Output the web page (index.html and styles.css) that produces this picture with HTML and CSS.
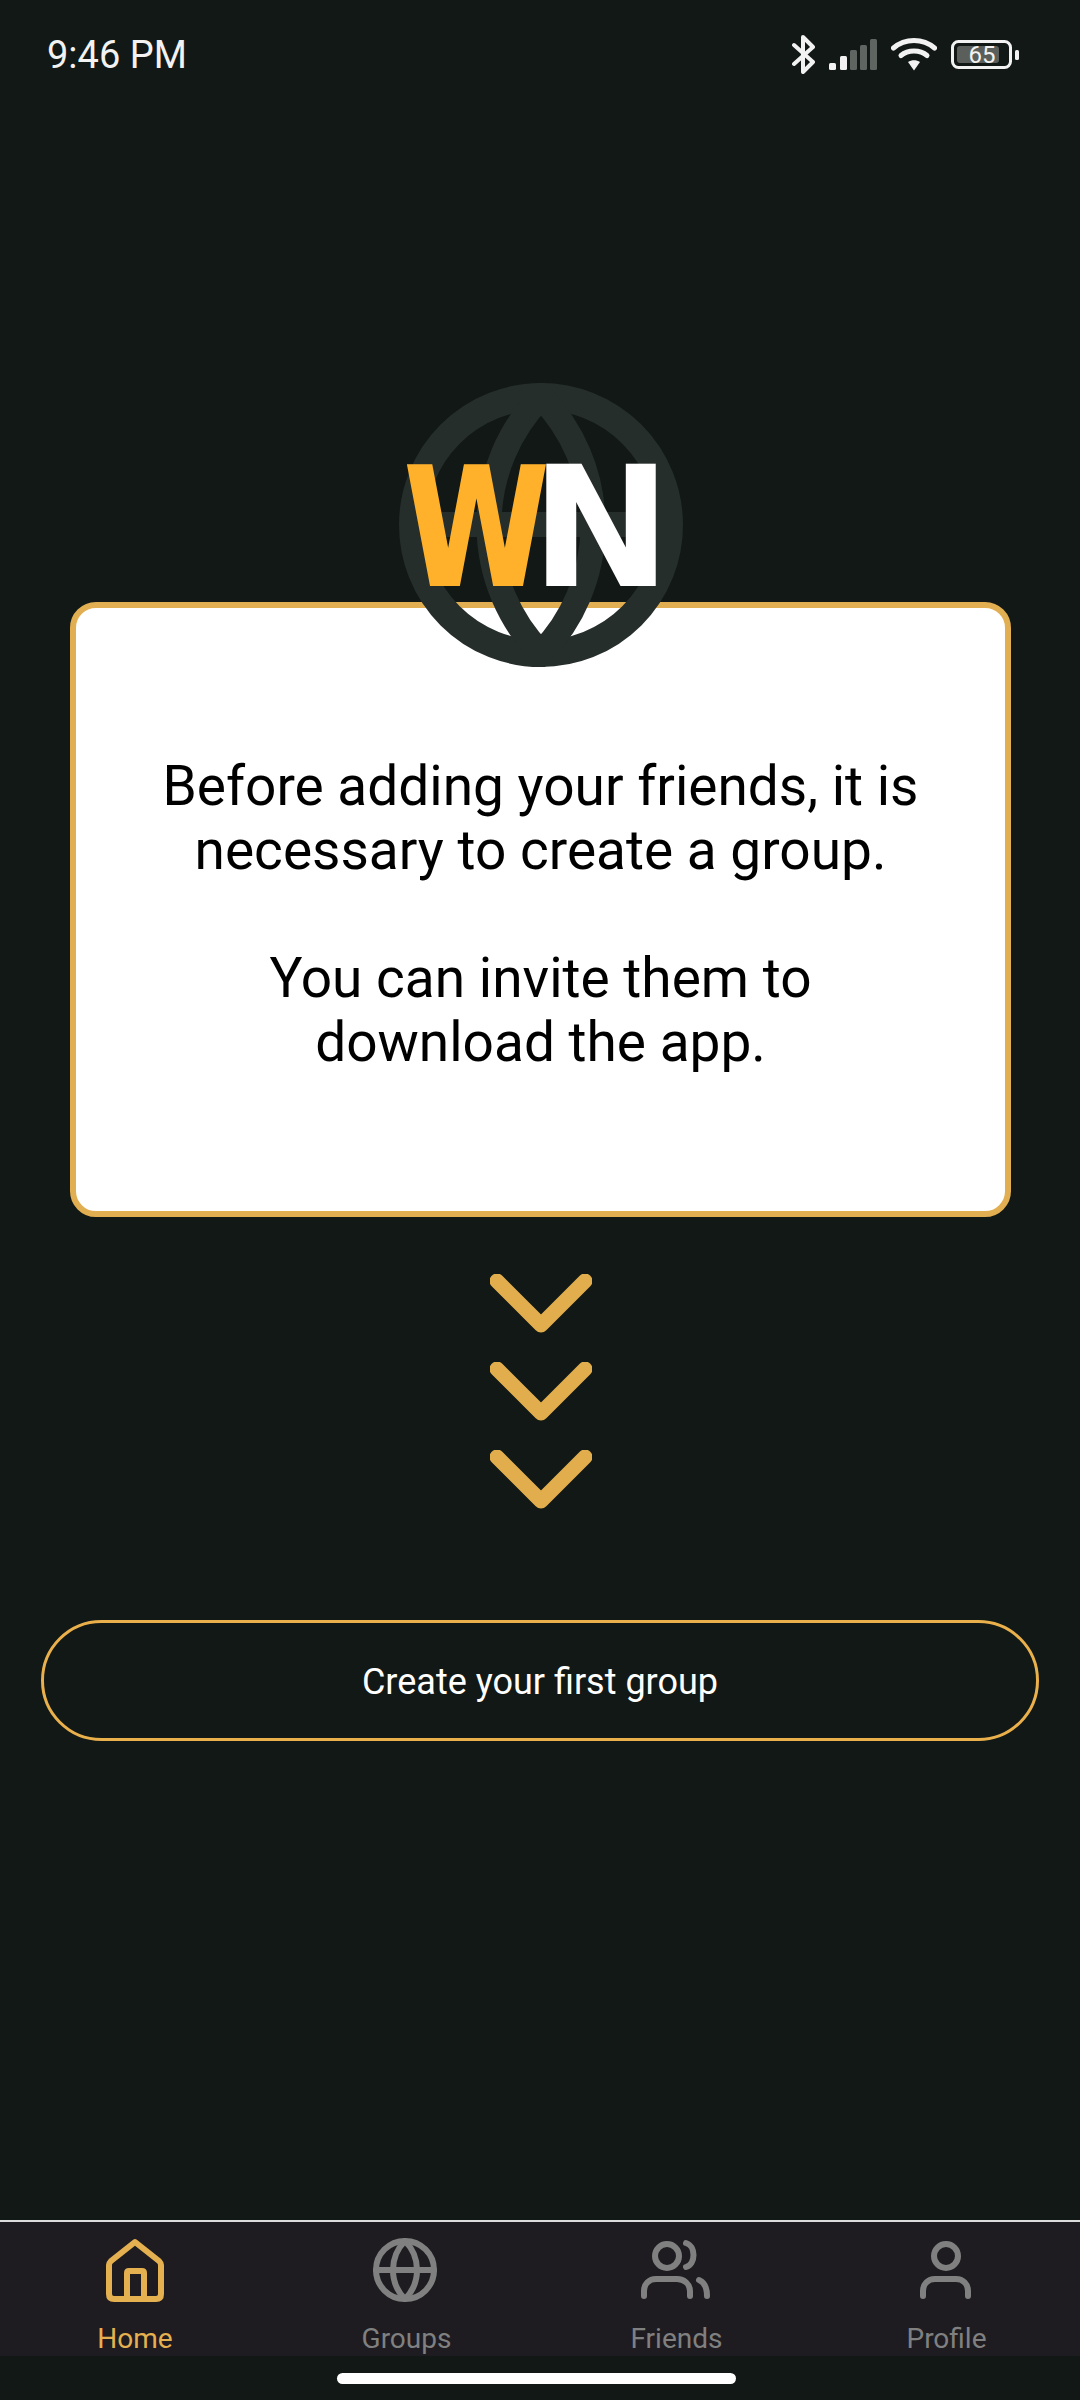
FILE: index.html
```html
<!DOCTYPE html>
<html lang="en">
<head>
    <meta charset="UTF-8">
    <meta name="viewport" content="width=device-width, initial-scale=1.0">
    <title>Home</title>
    <link rel="stylesheet" href="styles.css">
</head>
<body>
    <div class="screen">
        <div class="status-bar">
            <span class="status-time">9:46 PM</span>
            <div class="status-icons">
                <svg class="icon-bluetooth" viewBox="0 0 23 39" width="23" height="39">
                    <path d="M2 10 L21 27 L11 37 V2 L21 12 L2 29" fill="none" stroke="#f2f2f2" stroke-width="4" stroke-linecap="round" stroke-linejoin="round" />
                </svg>
                <svg class="icon-signal" viewBox="0 0 48 31" width="48" height="31">
                    <rect x="0" y="24" width="7" height="7" rx="1.5" fill="#f2f2f2" />
                    <rect x="11" y="17" width="7" height="14" rx="1.5" fill="#f2f2f2" />
                    <rect x="21" y="11" width="7" height="20" rx="1.5" fill="#5f6561" />
                    <rect x="31" y="6" width="7" height="25" rx="1.5" fill="#5f6561" />
                    <rect x="41" y="0" width="7" height="31" rx="1.5" fill="#5f6561" />
                </svg>
                <svg class="icon-wifi" viewBox="0 0 46 34" width="46" height="34">
                    <path d="M2.5 11 C14 1 32 1 43.5 11" fill="none" stroke="#f2f2f2" stroke-width="5" stroke-linecap="round" />
                    <path d="M10 18.5 C17 12.5 29 12.5 36 18.5" fill="none" stroke="#f2f2f2" stroke-width="5" stroke-linecap="round" />
                    <path d="M17 25 L23 33.5 L29 25 C25.5 22.5 20.5 22.5 17 25 Z" fill="#f2f2f2" />
                </svg>
                <svg class="icon-battery" viewBox="0 0 68 29" width="68" height="29">
                    <rect x="1.5" y="1.5" width="58" height="26" rx="6" fill="none" stroke="#f2f2f2" stroke-width="3" />
                    <rect x="6" y="6" width="42" height="17" rx="3" fill="#5a5f5c" />
                    <rect x="64" y="10" width="4" height="10" rx="1.5" fill="#f2f2f2" />
                    <text class="battery-level" x="31" y="23" text-anchor="middle">65</text>
                </svg>
            </div>
        </div>

        <div class="content">
            <svg class="logo" viewBox="0 0 284 284" width="284" height="284">
                <g fill="none" stroke="#262e2c">
                    <circle cx="142" cy="142" r="128.5" stroke-width="27" />
                    <path d="M142 14 A183.5 183.5 0 0 0 142 270 A183.5 183.5 0 0 0 142 14 Z" stroke-width="25" />
                    <path d="M14 141.5 H270" stroke-width="25" />
                </g>
                <text class="logo-letter logo-w" x="5" y="202" textLength="145" lengthAdjust="spacingAndGlyphs">W</text>
                <text class="logo-letter logo-n" x="132" y="203" textLength="140" lengthAdjust="spacingAndGlyphs">N</text>
            </svg>

            <div class="card">
                <p>Before adding your friends, it is<br>necessary to create a group.</p>
                <p>You can invite them to<br>download the app.</p>
            </div>

            <div class="chevrons">
                <svg viewBox="0 0 102 59" width="102" height="59"><path d="M7 7 L51 51 L95 7" /></svg>
                <svg viewBox="0 0 102 59" width="102" height="59"><path d="M7 7 L51 51 L95 7" /></svg>
                <svg viewBox="0 0 102 59" width="102" height="59"><path d="M7 7 L51 51 L95 7" /></svg>
            </div>

            <div class="create-btn">Create your first group</div>
        </div>

        <div class="tab-bar">
            <div class="tab tab-active">
                <svg viewBox="0 0 64 64" width="64" height="64">
                    <path d="M32 4 L56 23 Q58 25 58 27 V56 Q58 61 53 61 H11 Q6 61 6 56 V27 Q6 25 8 23 Z" />
                    <path d="M24 61 V35 Q24 33 26 33 H39 Q41 33 41 35 V61" />
                </svg>
                <span>Home</span>
            </div>
            <div class="tab">
                <svg viewBox="0 0 64 64" width="64" height="64">
                    <circle cx="32" cy="32" r="29" />
                    <path d="M32 3 A41 41 0 0 0 32 61 A41 41 0 0 0 32 3 Z" />
                    <path d="M3 32 H61" />
                </svg>
                <span>Groups</span>
            </div>
            <div class="tab">
                <svg viewBox="0 0 72 64" width="72" height="64">
                    <circle cx="28" cy="18" r="12" />
                    <path d="M47 5 C57 8 57 26 47 29" />
                    <path d="M5 58 V53 C5 46 10 41 17 41 H38 C45 41 51 46 51 53 V58" />
                    <path d="M60 42 C65 44 68 49 68 58" />
                </svg>
                <span>Friends</span>
            </div>
            <div class="tab">
                <svg viewBox="0 0 64 64" width="64" height="64">
                    <circle cx="33" cy="18" r="12" />
                    <path d="M10 58 V53 C10 46 15 41 22 41 H43 C50 41 55 46 55 53 V58" />
                </svg>
                <span>Profile</span>
            </div>
        </div>

        <div class="gesture-area">
            <div class="home-indicator"></div>
        </div>
    </div>
</body>
</html>
```

FILE: styles.css
```css
* {
    box-sizing: border-box;
}
body {
    margin: 0;
    background: #111815;
    font-family: 'Roboto', 'Liberation Sans', sans-serif;
    color: #fff;
}
.screen {
    display: flex;
    flex-direction: column;
    width: 1080px;
    height: 2400px;
    overflow: hidden;
}

/* status bar */
.status-bar {
    display: flex;
    justify-content: space-between;
    align-items: center;
    height: 108px;
    padding: 0 61px 0 47px;
}
.status-time {
    margin-top: 2px;
    font-size: 38px;
    color: #f2f2f2;
}
.status-icons {
    display: flex;
    align-items: center;
    gap: 14px;
}
.battery-level {
    font-family: 'Roboto', sans-serif;
    font-size: 24px;
    fill: #f2f2f2;
}

/* main column */
.content {
    flex: 1;
    display: flex;
    flex-direction: column;
    align-items: center;
    padding-top: 275px;
}
.logo {
    position: relative;
    z-index: 1;
    margin-bottom: -65px;
    margin-left: 2px;
}
.logo-letter {
    font-family: 'DejaVu Sans', sans-serif;
    font-weight: 700;
    font-size: 167px;
}
.logo-w {
    fill: #ffb12b;
    stroke: #ffb12b;
    stroke-width: 2px;
    font-size: 164px;
}
.logo-n {
    fill: #fff;
}
.card {
    display: flex;
    flex-direction: column;
    justify-content: center;
    gap: 64px;
    width: 941px;
    height: 615px;
    margin-left: 1px;
    padding-top: 8px;
    border: 6px solid #e2ae52;
    border-radius: 26px;
    background: #fff;
    color: #000;
    font-size: 55px;
    line-height: 64px;
    text-align: center;
}
.card p {
    margin: 0;
}
.chevrons {
    display: flex;
    flex-direction: column;
    gap: 29px;
    margin-top: 57px;
    margin-left: 2px;
}
.chevrons svg {
    display: block;
    fill: none;
    stroke: #e2ae4d;
    stroke-width: 15;
    stroke-linecap: round;
    stroke-linejoin: round;
    filter: blur(0.6px);
}
.create-btn {
    display: flex;
    justify-content: center;
    align-items: center;
    width: 998px;
    height: 121px;
    margin-top: 111px;
    padding-top: 3px;
    border: 3px solid #eab04c;
    border-radius: 61px;
    font-size: 36px;
}

/* bottom nav */
.tab-bar {
    display: flex;
    height: 136px;
    border-top: 2px solid #dcdcdc;
    background: #1e1c20;
}
.tab {
    flex: 1;
    display: flex;
    flex-direction: column;
    align-items: center;
    padding-top: 16px;
    color: #808080;
    font-size: 28px;
    line-height: 34px;
}
.tab span {
    margin-left: 3px;
}
.tab svg {
    fill: none;
    stroke: currentColor;
    stroke-width: 6;
    stroke-linecap: round;
    stroke-linejoin: round;
    margin-bottom: 20px;
}
.tab-active {
    color: #e5b04f;
}
.tab-active span {
    margin-left: 0;
}
.gesture-area {
    display: flex;
    justify-content: center;
    height: 44px;
    padding: 17px 7px 0 0;
}
.home-indicator {
    width: 399px;
    height: 11px;
    border-radius: 6px;
    background: #fff;
}
```
